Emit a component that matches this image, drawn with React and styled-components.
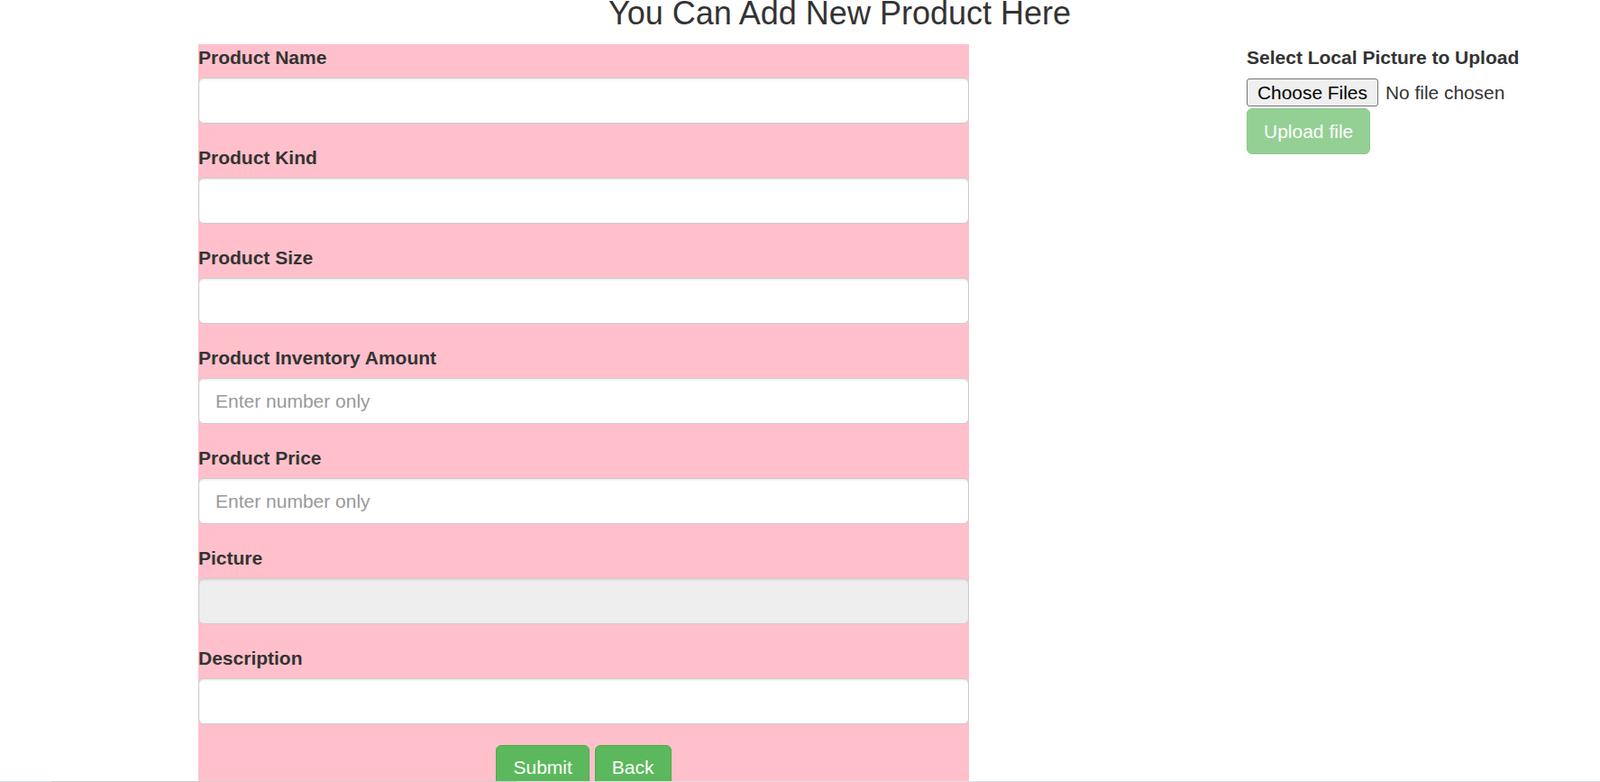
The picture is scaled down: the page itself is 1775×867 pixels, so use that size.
import styled, { createGlobalStyle } from "styled-components";

const GlobalStyles = createGlobalStyle`
  * {
    box-sizing: border-box;
  }
  html, body {
    margin: 0;
    padding: 0;
    height: 100%;
    overflow: hidden;
    background: #fff;
  }
  body {
    font-family: "Liberation Sans", Arial, Helvetica, sans-serif;
    font-size: 21px;
    line-height: 1.42857;
    color: #333;
  }
`;

const Page = styled.div`
  width: 100vw;
  height: 100vh;
  overflow: hidden;
`;

const Title = styled.h3`
  margin: -5px 0 14px;
  padding-left: 88px;
  font-size: 36px;
  font-weight: 500;
  line-height: 1.1;
  text-align: center;
  color: #333;
`;

const Columns = styled.div`
  display: flex;
  align-items: flex-start;
  padding-left: 220px;
  gap: 308px;
`;

const ProductForm = styled.form`
  flex: none;
  width: 855px;
  background: pink;
  padding-bottom: 30px;
`;

const FormGroup = styled.div`
  margin-bottom: 22.5px;
`;

const Label = styled.label`
  display: block;
  font-weight: bold;
  font-size: 21px;
  line-height: 30px;
  margin-bottom: 7.5px;
  white-space: nowrap;
`;

const TextInput = styled.input`
  display: block;
  width: 100%;
  height: 51px;
  padding: 9px 18px;
  font-family: inherit;
  font-size: 21px;
  line-height: 1.42857;
  color: #555;
  background: ${(p) => (p.readOnly ? "#eee" : "#fff")};
  border: 1.5px solid #ccc;
  border-radius: 6px;
  box-shadow: inset 0 1.5px 1.5px rgba(0, 0, 0, 0.075);
  outline: none;

  &::placeholder {
    color: #999;
  }
`;

const Actions = styled.div`
  display: flex;
  justify-content: center;
  gap: 6px;
`;

const Button = styled.button`
  display: inline-block;
  height: 51px;
  padding: 9px 18px;
  font-family: inherit;
  font-size: 21px;
  line-height: 1.42857;
  color: #fff;
  background: #5cb85c;
  border: 1.5px solid #4cae4c;
  border-radius: 6px;
  cursor: pointer;
  opacity: ${(p) => (p.disabled ? 0.65 : 1)};
`;

const UploadPanel = styled.div`
  flex: none;
  display: flex;
  flex-direction: column;
  align-items: flex-start;
`;

const FileInput = styled.input`
  font-family: "Liberation Sans", Arial, sans-serif;
  font-size: 20.9px;
  color: #333;
  height: 33px;
  margin-bottom: 1px;

  &::file-selector-button {
    font-family: inherit;
    font-size: 20.9px;
    color: #000;
    height: 31px;
    padding: 0 11px;
    margin: 1px 8px 0 0;
    background: #efefef;
    border: 1.5px solid #767676;
    border-radius: 3px;
  }
`;

const BottomEdge = styled.div`
  position: fixed;
  left: 0;
  right: 0;
  bottom: 0;
  height: 1px;
  background: linear-gradient(
    to right,
    #d3e6ee 0 57px,
    #cfcfcf 57px 573px,
    #d6e2ea 573px 100%
  );
`;

const fields = [
  { id: "name", label: "Product Name" },
  { id: "kind", label: "Product Kind" },
  { id: "size", label: "Product Size" },
  { id: "amount", label: "Product Inventory Amount", placeholder: "Enter number only" },
  { id: "price", label: "Product Price", placeholder: "Enter number only" },
  { id: "picture", label: "Picture", readOnly: true },
  { id: "description", label: "Description" },
];

const App = () => {
  return (
    <>
      <GlobalStyles />
      <Page>
        <Title>You Can Add New Product Here</Title>
        <Columns>
          <ProductForm onSubmit={(e) => e.preventDefault()}>
            {fields.map((f) => (
              <FormGroup key={f.id}>
                <Label htmlFor={f.id}>{f.label}</Label>
                <TextInput
                  id={f.id}
                  type="text"
                  placeholder={f.placeholder}
                  readOnly={f.readOnly}
                />
              </FormGroup>
            ))}
            <Actions>
              <Button type="submit">Submit</Button>
              <Button type="button">Back</Button>
            </Actions>
          </ProductForm>
          <UploadPanel>
            <Label htmlFor="upload">Select Local Picture to Upload</Label>
            <FileInput id="upload" type="file" multiple />
            <Button type="button" disabled>
              Upload file
            </Button>
          </UploadPanel>
        </Columns>
        <BottomEdge />
      </Page>
    </>
  );
};

export default App;
